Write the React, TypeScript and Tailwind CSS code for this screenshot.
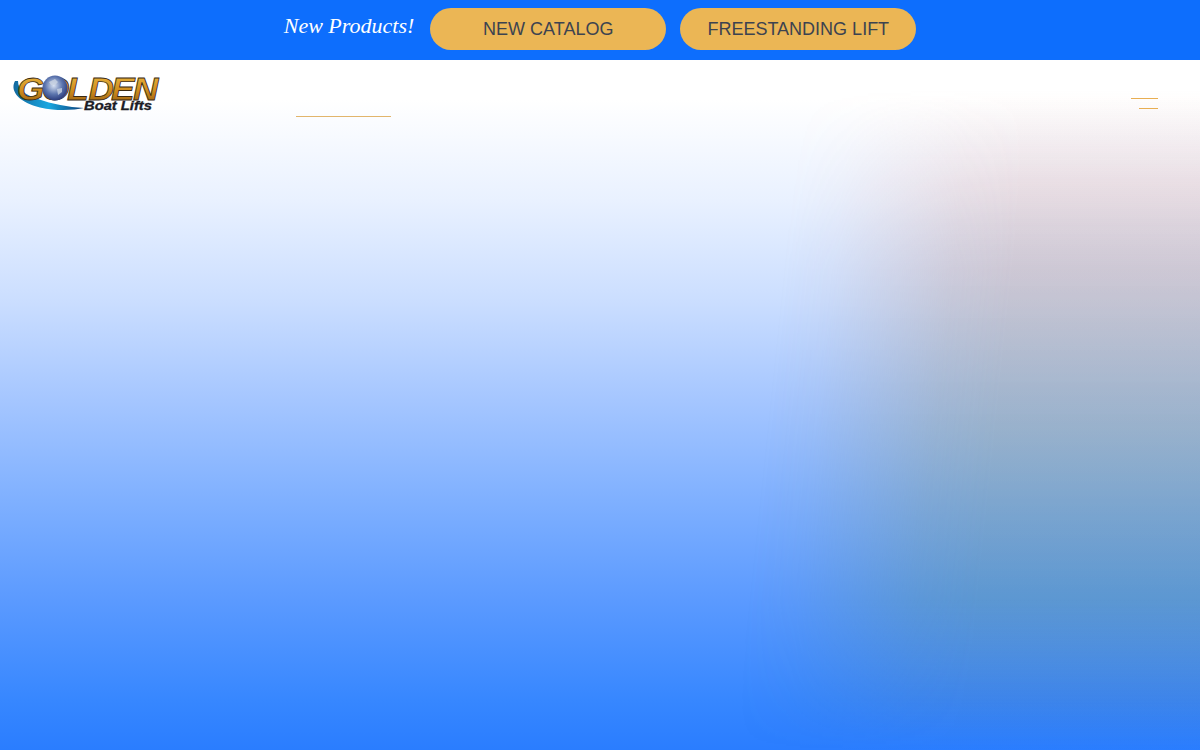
export default function App() {
  return (
    <div className="flex h-[750px] w-full flex-col overflow-hidden bg-white font-['Liberation_Sans',Arial,sans-serif]">
      <div className="flex h-[60px] shrink-0 items-start justify-center bg-[#0d6efd] pt-2">
        <span className="mr-4 font-['Liberation_Serif',serif] text-[22px] italic leading-[36px] text-white">New Products!</span>
        <a className="mr-[14px] flex h-[42px] w-[236px] items-center justify-center rounded-full bg-[#ebb655] text-lg text-[#3c4350]">NEW CATALOG</a>
        <a className="flex h-[42px] w-[236px] items-center justify-center rounded-full bg-[#ebb655] text-lg text-[#3c4350]">FREESTANDING LIFT</a>
      </div>
      <div className="relative flex-1 bg-[linear-gradient(180deg,#ffffff_40px,#e9f1ff_140px,#cbdeff_240px,#a5c6ff_340px,#7fb0ff_440px,#5b9aff_540px,#3787ff_640px,#2a7dff_690px)]">
        <div className="absolute inset-0 bg-[linear-gradient(180deg,rgba(217,120,95,0)_30px,rgba(217,120,95,0.17)_125px,rgba(191,143,126,0.33)_210px,rgba(149,151,109,0.35)_370px,rgba(94,146,126,0.35)_540px,rgba(108,117,83,0.12)_640px,rgba(108,117,83,0)_690px)] [mask-image:linear-gradient(96deg,transparent_800px,rgba(0,0,0,0.15)_850px,rgba(0,0,0,0.5)_910px,rgba(0,0,0,0.85)_970px,#000_1030px)]" />
        <nav className="relative flex items-start pl-3 pr-[42px] pt-[12px]">
          <svg width="150" height="42" viewBox="0 0 150 42" className="shrink-0 overflow-visible">
            <defs>
              <linearGradient id="g" x1="0" y1="0" x2="0" y2="1">
                <stop offset="0" stopColor="#edbb45" />
                <stop offset="0.55" stopColor="#cf8c1c" />
                <stop offset="1" stopColor="#8a5510" />
              </linearGradient>
              <radialGradient id="e" cx="0.45" cy="0.4" r="0.7">
                <stop offset="0" stopColor="#d8e2f2" />
                <stop offset="0.5" stopColor="#5c75ae" />
                <stop offset="1" stopColor="#18266a" />
              </radialGradient>
              <linearGradient id="s" x1="0" y1="0" x2="1" y2="0">
                <stop offset="0" stopColor="#14699f" />
                <stop offset="0.5" stopColor="#19a7e0" />
                <stop offset="1" stopColor="#0a3a76" />
              </linearGradient>
            </defs>
            <path d="M3 9C-3 20 9 31 28 35.5C46 39.5 62 38 72 36C56 35 40 32 26 27C14 23 6 18 6 9Z" fill="url(#s)" />
            <text transform="scale(1.1 1)" x="4.5 27 50 69.5 90 110" y="28" fontFamily="Liberation Sans" fontWeight="700" fontStyle="italic" fontSize="32" fill="url(#g)" stroke="#3a2a12" strokeWidth="0.8">GOLDEN</text>
            <circle cx="43" cy="16" r="12.5" fill="url(#e)" />
            <path d="M37 10l6-3 3 3-3 3-4 0ZM45 17l5-1 0 4-4 3Z" fill="#c9d3e2" opacity="0.8" />
            <text x="72" y="38" fontFamily="Liberation Sans" fontWeight="700" fontStyle="italic" fontSize="12" textLength="68" lengthAdjust="spacingAndGlyphs" fill="#1c1c26" stroke="#1c1c26" strokeWidth="0.3">Boat Lifts</text>
          </svg>
          <div className="ml-[134px] mt-[44px] h-px w-[95px] bg-[#e2b56c]" />
          <div className="ml-auto mt-[26px] flex w-[27px] flex-col items-end gap-[9px]">
            <span className="h-px w-[27px] bg-[#e8ae52]" />
            <span className="h-px w-[19px] bg-[#e8ae52]" />
          </div>
        </nav>
      </div>
    </div>
  );
}
